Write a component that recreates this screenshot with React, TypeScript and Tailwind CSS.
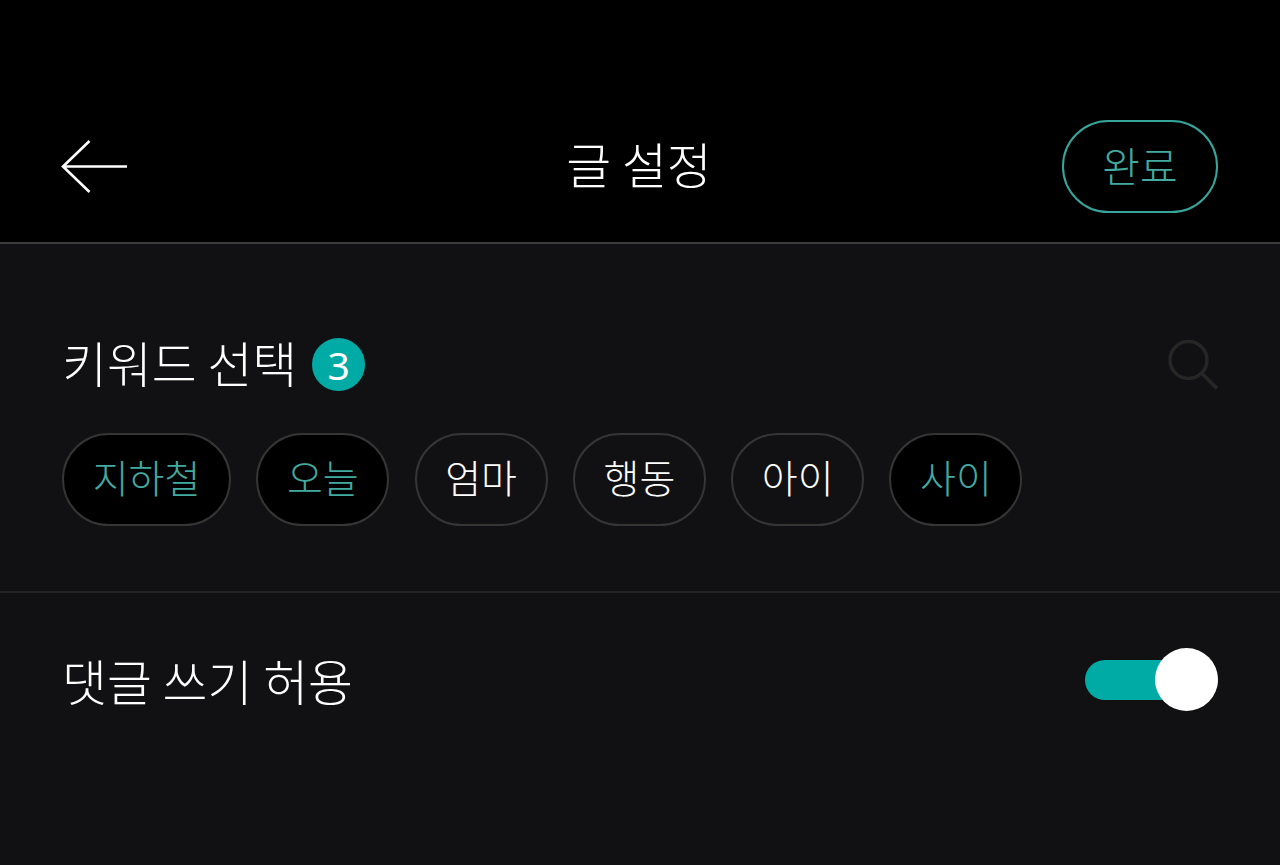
import React, { useState } from 'react';

const keywords = [
  { name: '지하철', width: 'w-[169px]' },
  { name: '오늘', width: 'w-[133px]' },
  { name: '엄마', width: 'w-[133px]' },
  { name: '행동', width: 'w-[133px]' },
  { name: '아이', width: 'w-[133px]' },
  { name: '사이', width: 'w-[133px]' },
];

const App: React.FC = () => {
  const [selected, setSelected] = useState<string[]>(['지하철', '오늘', '사이']);
  const [allowComments, setAllowComments] = useState(true);

  const toggleKeyword = (name: string) => {
    if (selected.includes(name)) {
      setSelected(selected.filter((item) => item !== name));
    } else {
      setSelected([...selected, name]);
    }
  };

  return (
    <div className="min-h-screen w-full bg-[#111113] text-white font-light font-['Noto_Sans_CJK_KR',sans-serif]">
      <header className="grid h-[244px] grid-cols-[1fr_auto_1fr] items-end border-b-2 border-[#3c3c3c] bg-black px-[62px] pb-[29px]">
        <button type="button" aria-label="뒤로" className="mb-[18px] -ml-px w-[66px]">
          <svg width="66" height="56" viewBox="0 0 66 56" fill="none" stroke="white" strokeWidth="2.6">
            <path d="M28.5 2L2 27.5L28.5 53M1.5 27.5H66" />
          </svg>
        </button>
        <h1 className="mb-[16px] -translate-x-px text-[48.8px] leading-[68px] font-light">글 설정</h1>
        <button
          type="button"
          className="flex h-[93px] w-[156px] items-center justify-center justify-self-end rounded-full border-2 border-[#36a59b] pb-[5px] text-[41px] leading-none text-[#43aaa0]"
        >
          완료
        </button>
      </header>

      <section className="h-[349px] border-b-2 border-[#242426] px-[62px] pt-[84px]">
        <div className="flex h-[72px] items-center justify-between">
          <div className="flex items-center">
            <h2 className="pb-[5px] text-[48.8px] leading-[72px] font-light">키워드 선택</h2>
            <span className="ml-[15px] flex h-[53px] w-[53px] items-center justify-center rounded-full bg-[#00aba6] font-['Noto_Sans'] text-[39px] leading-none font-normal">
              {selected.length}
            </span>
          </div>
          <button type="button" aria-label="검색">
            <svg width="52" height="52" viewBox="0 0 52 52" fill="none" stroke="#262627" strokeWidth="3.5">
              <circle cx="22.5" cy="22" r="18.5" />
              <path d="M35.5 35L51 50.5" />
            </svg>
          </button>
        </div>
        <div className="mt-[33px] flex gap-[25.3px]">
          {keywords.map((keyword) => (
            <button
              key={keyword.name}
              type="button"
              onClick={() => toggleKeyword(keyword.name)}
              className={`${keyword.width} flex h-[93px] items-center justify-center rounded-full border-2 border-[#353535] pb-[7px] text-[39px] leading-none ${
                selected.includes(keyword.name) ? 'bg-black text-[#43aaa0]' : ''
              }`}
            >
              {keyword.name}
            </button>
          ))}
        </div>
      </section>

      <section className="flex items-center justify-between px-[62px] pt-[48px]">
        <h2 className="pt-[3px] text-[48.8px] leading-[72px] font-light">댓글 쓰기 허용</h2>
        <button
          type="button"
          role="switch"
          aria-checked={allowComments}
          aria-label="댓글 쓰기 허용"
          onClick={() => setAllowComments(!allowComments)}
          className={`mt-0.5 flex h-10 w-[133px] items-center rounded-full ${
            allowComments ? 'justify-end bg-[#00aba6]' : 'justify-start bg-[#3b3b3b]'
          }`}
        >
          <span className="h-[63px] w-[63px] shrink-0 rounded-full bg-white" />
        </button>
      </section>
    </div>
  );
};

export default App;
